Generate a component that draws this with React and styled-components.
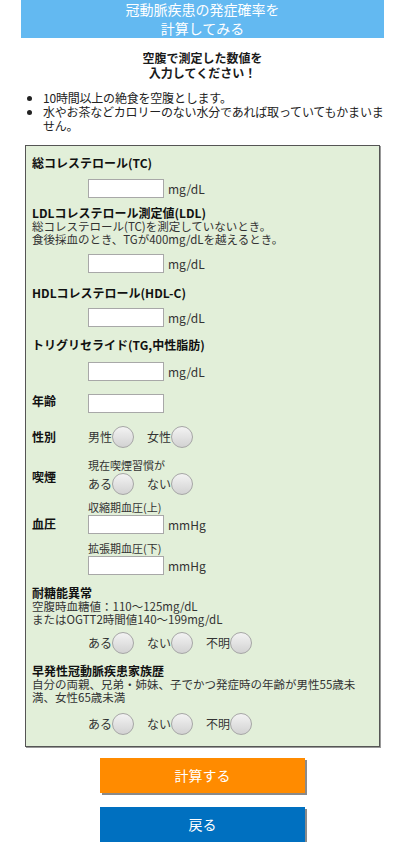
import React, { useState } from "react";
import styled, { createGlobalStyle } from "styled-components";

const GlobalStyle = createGlobalStyle`
  html, body {
    margin: 0;
    padding: 0;
    background: #fff;
  }
  body {
    font-family: "Noto Sans CJK JP", "Noto Sans", sans-serif;
    color: #1a1a1a;
    width: 400px;
  }
`;

function RadioSet({ name, options, value, onChange }) {
  return (
    <RadioGroup>
      {options.map((opt) => (
        <RadioOption key={opt}>
          {opt}
          <Radio
            type="radio"
            name={name}
            checked={value === opt}
            onChange={() => onChange(opt)}
          />
        </RadioOption>
      ))}
    </RadioGroup>
  );
}

export default function App() {
  const [form, setForm] = useState({});
  const set = (key) => (v) => setForm({ ...form, [key]: v });

  return (
    <Page>
      <GlobalStyle />
      <Header>
        冠動脈疾患の発症確率を
        <br />
        計算してみる
      </Header>
      <Lead>
        空腹で測定した数値を
        <br />
        入力してください！
      </Lead>
      <Notes>
        <li>10時間以上の絶食を空腹とします。</li>
        <li>水やお茶などカロリーのない水分であれば取っていてもかまいません。</li>
      </Notes>

      <FormBox>
        <Heading>総コレステロール(TC)</Heading>
        <InputRow $mt={9}>
          <Input />
          <Unit>mg/dL</Unit>
        </InputRow>

        <Heading $mt={8}>LDLコレステロール測定値(LDL)</Heading>
        <Desc>
          総コレステロール(TC)を測定していないとき。
          <br />
          食後採血のとき、TGが400mg/dLを越えるとき。
        </Desc>
        <InputRow $mt={8}>
          <Input />
          <Unit>mg/dL</Unit>
        </InputRow>

        <Heading $mt={13}>HDLコレステロール(HDL-C)</Heading>
        <InputRow $mt={8}>
          <Input />
          <Unit>mg/dL</Unit>
        </InputRow>

        <Heading $mt={11}>トリグリセライド(TG,中性脂肪)</Heading>
        <InputRow $mt={10}>
          <Input />
          <Unit>mg/dL</Unit>
        </InputRow>

        <LabeledRow $mt={7}>
          <RowLabel>年齢</RowLabel>
          <div>
            <Input />
          </div>
        </LabeledRow>

        <LabeledRow $mt={13}>
          <RowLabel>性別</RowLabel>
          <RadioSet
            name="sex"
            options={["男性", "女性"]}
            value={form.sex}
            onChange={set("sex")}
          />
        </LabeledRow>

        <LabeledRow $mt={10}>
          <RowLabel>喫煙</RowLabel>
          <div>
            <SubText>現在喫煙習慣が</SubText>
            <RadioSet
              name="smoke"
              options={["ある", "ない"]}
              value={form.smoke}
              onChange={set("smoke")}
            />
          </div>
        </LabeledRow>

        <LabeledRow $mt={5}>
          <RowLabel $pt={14}>血圧</RowLabel>
          <div>
            <SubText>収縮期血圧(上)</SubText>
            <InputLine>
              <Input />
              <Unit>mmHg</Unit>
            </InputLine>
          </div>
        </LabeledRow>
        <LabeledRow $mt={7}>
          <span />
          <div>
            <SubText>拡張期血圧(下)</SubText>
            <InputLine>
              <Input />
              <Unit>mmHg</Unit>
            </InputLine>
          </div>
        </LabeledRow>

        <Heading $mt={11}>耐糖能異常</Heading>
        <Desc>
          空腹時血糖値：110〜125mg/dL
          <br />
          またはOGTT2時間値140〜199mg/dL
        </Desc>
        <InputRow $mt={6}>
          <RadioSet
            name="glucose"
            options={["ある", "ない", "不明"]}
            value={form.glucose}
            onChange={set("glucose")}
          />
        </InputRow>

        <Heading $mt={10}>早発性冠動脈疾患家族歴</Heading>
        <Desc>
          自分の両親、兄弟・姉妹、子でかつ発症時の年齢が男性55歳未
          <br />
          満、女性65歳未満
        </Desc>
        <InputRow $mt={9}>
          <RadioSet
            name="family"
            options={["ある", "ない", "不明"]}
            value={form.family}
            onChange={set("family")}
          />
        </InputRow>
      </FormBox>

      <Actions>
        <ActionButton $bg="#ff8b00">計算する</ActionButton>
        <ActionButton $bg="#0070c0">戻る</ActionButton>
      </Actions>
    </Page>
  );
}

const Page = styled.div`
  margin-left: 21px;
  width: 363px;
`;

const Header = styled.div`
  background: #63b9f1;
  color: #fff;
  font-size: 14px;
  line-height: 19px;
  text-align: center;
  height: 38px;
`;

const Lead = styled.div`
  margin-top: 12px;
  font-size: 12px;
  font-weight: bold;
  line-height: 15px;
  text-align: center;
`;

const Notes = styled.ul`
  margin: 11px 0 0;
  padding-left: 22px;
  font-size: 12px;
  line-height: 14px;
  letter-spacing: -0.2px;
  color: #222;

  li {
    list-style: disc;
  }
`;

const FormBox = styled.div`
  margin: 12px 4px 0;
  background: #e2efd9;
  border: 1px solid #555;
  box-shadow: 1px 1px 0 #999;
  padding: 10px 4px 11px 6px;
`;

const Heading = styled.div`
  margin-top: ${({ $mt }) => $mt || 0}px;
  font-size: 12px;
  font-weight: bold;
  line-height: 14px;
  color: #111;
  white-space: nowrap;
`;

const Desc = styled.div`
  font-size: 11.5px;
  line-height: 13px;
  color: #333;
  white-space: nowrap;
`;

const InputRow = styled.div`
  display: flex;
  align-items: center;
  margin-top: ${({ $mt }) => $mt || 0}px;
  margin-left: 56px;
`;

const InputLine = styled.div`
  display: flex;
  align-items: center;
`;

const Input = styled.input`
  box-sizing: border-box;
  width: 76px;
  height: 19px;
  border: 1px solid #a8a8a8;
  background: #fff;
  margin: 0;
  padding: 0 3px;
  font-size: 12px;
`;

const Unit = styled.span`
  margin-left: 4px;
  font-size: 12px;
  color: #333;
`;

const LabeledRow = styled.div`
  display: grid;
  grid-template-columns: 56px 1fr;
  align-items: center;
  margin-top: ${({ $mt }) => $mt || 0}px;
`;

const RowLabel = styled.div`
  font-size: 12px;
  font-weight: bold;
  color: #111;
  padding-top: ${({ $pt }) => $pt || 0}px;
`;

const SubText = styled.div`
  font-size: 11px;
  line-height: 15px;
  color: #333;
`;

const RadioGroup = styled.div`
  display: flex;
  align-items: center;
  gap: 13px;
`;

const RadioOption = styled.label`
  display: flex;
  align-items: center;
  font-size: 12px;
  color: #333;
`;

const Radio = styled.input`
  appearance: none;
  -webkit-appearance: none;
  margin: 0;
  width: 22px;
  height: 22px;
  border-radius: 50%;
  border: 1px solid #a6a6a6;
  background: linear-gradient(#f3f3f3, #d2d2d2);
  box-sizing: border-box;

  &:checked {
    background: radial-gradient(circle, #555 0 4px, #e6e6e6 5px);
  }
`;

const Actions = styled.div`
  display: flex;
  flex-direction: column;
  align-items: center;
  gap: 14px;
  margin-top: 11px;
`;

const ActionButton = styled.button`
  width: 205px;
  height: 35px;
  border: none;
  background: ${({ $bg }) => $bg};
  color: #fff;
  font-family: "Noto Sans CJK JP", sans-serif;
  font-size: 14px;
  box-shadow: 2px 2px 0 #8a8a8a;
  cursor: pointer;
`;
